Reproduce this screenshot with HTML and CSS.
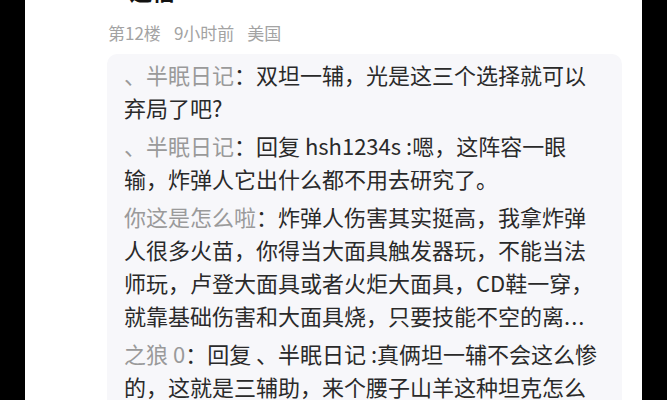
FILE: index.html
```html
<!DOCTYPE html>
<html lang="zh-CN">
<head>
<meta charset="utf-8">
<link rel="stylesheet" href="styles.css">
</head>
<body>
<div class="page">
  <div class="title">送福</div>
  <div class="meta"><span>第12楼</span><span>9小时前</span><span>美国</span></div>
  <div class="replies">
    <p class="reply"><span class="name">、半眠日记</span>：双坦一辅，光是这三个选择就可以弃局了吧?</p>
    <p class="reply"><span class="name">、半眠日记</span>：回复 hsh1234s :嗯，这阵容一眼输，炸弹人它出什么都不用去研究了。</p>
    <p class="reply"><span class="name">你这是怎么啦</span>：炸弹人伤害其实挺高，我拿炸弹人很多火苗，你得当大面具触发器玩，不能当法师玩，卢登大面具或者火炬大面具，CD鞋一穿，就靠基础伤害和大面具烧，只要技能不空的离<span class="more">...</span></p>
    <p class="reply"><span class="name">之狼 0</span>：回复 、半眠日记 :真俩坦一辅不会这么惨的，这就是三辅助，来个腰子山羊这种坦克怎么也不至于这么惨。</p>
  </div>
</div>
</body>
</html>
```
FILE: styles.css
```css
html, body {
  margin: 0;
  padding: 0;
  background: #000;
}
body {
  font-family: "Noto Sans CJK SC", "Noto Sans", sans-serif;
  width: 667px;
  height: 400px;
  overflow: hidden;
}
.page {
  margin-left: 25px;
  width: 617px;
  height: 400px;
  background: #fff;
  overflow: hidden;
  padding-left: 82px;
  box-sizing: border-box;
}
.title {
  font-size: 22px;
  font-weight: bold;
  color: #111;
  line-height: 30px;
  margin-top: -25px;
  padding-left: 23px;
}
.meta {
  display: flex;
  gap: 13px;
  font-size: 17px;
  line-height: 24px;
  color: #a3a3a3;
  margin-top: 16px;
  padding-left: 1px;
}
.replies {
  margin-top: 9px;
  width: 515px;
  background: #f7f7fa;
  border-radius: 10px;
  padding: 4px 20px 20px 17px;
  box-sizing: border-box;
}
.reply {
  margin: 0 0 5px 0;
  font-size: 22px;
  line-height: 33px;
  color: #2a2a2a;
}
.name {
  color: #9a9a9a;
}
.more {
  letter-spacing: 1px;
}
```
